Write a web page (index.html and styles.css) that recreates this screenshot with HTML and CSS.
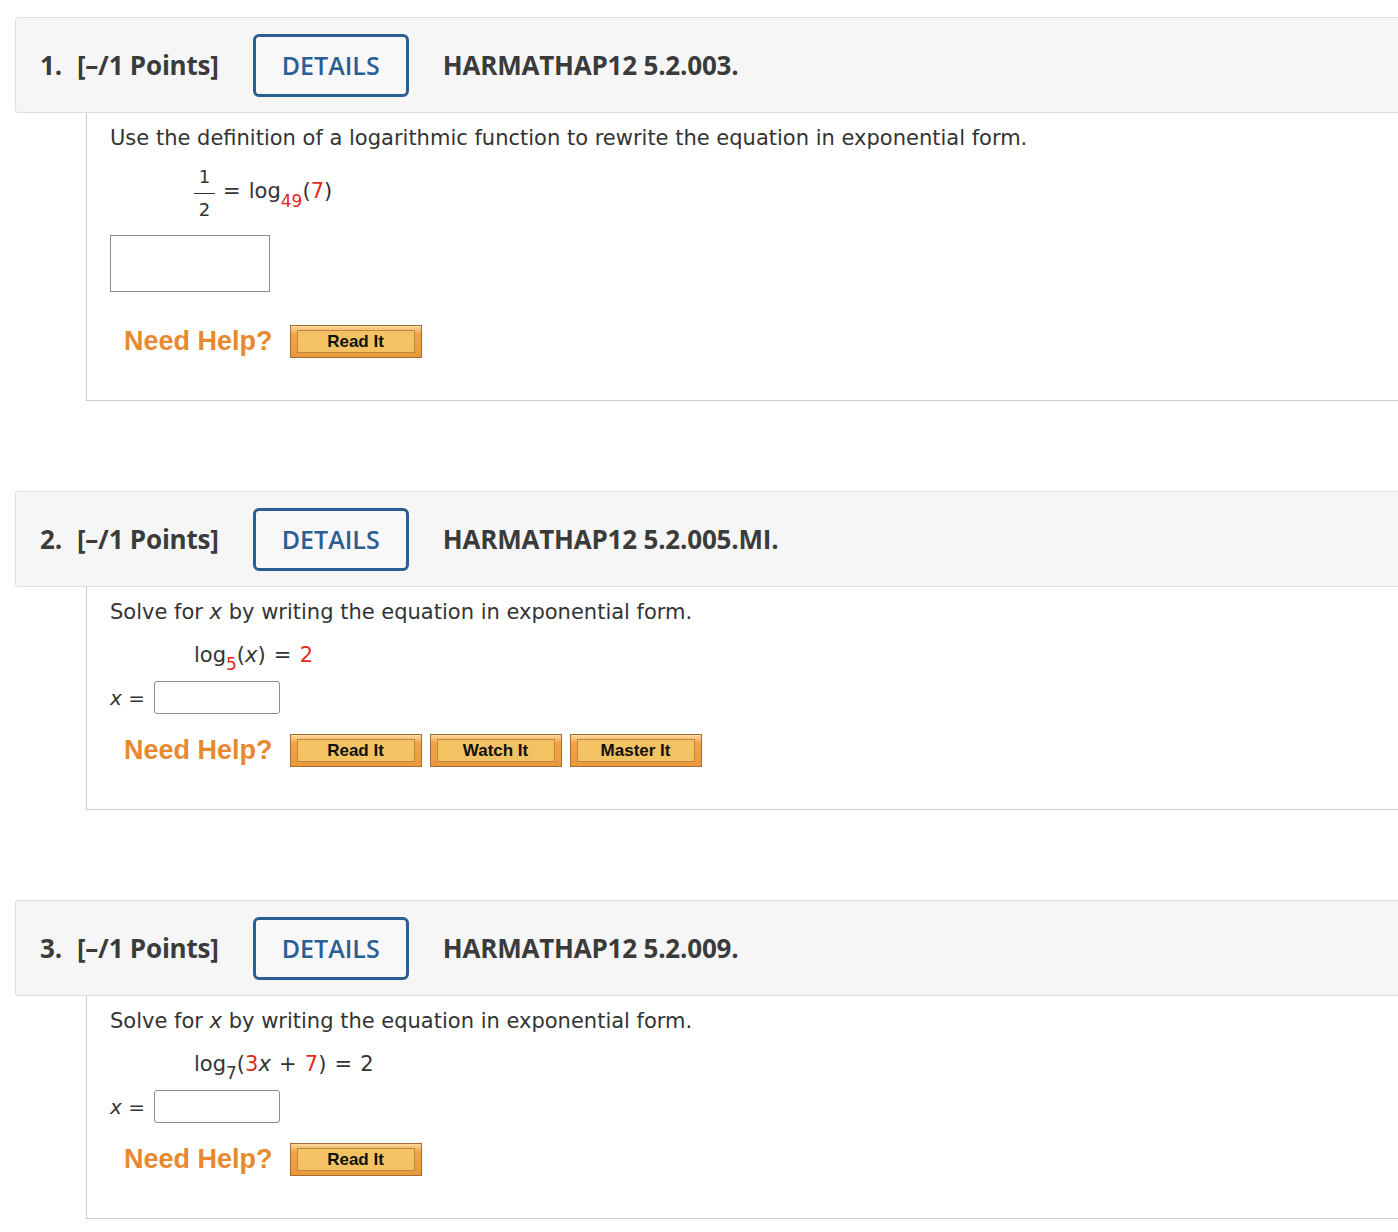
FILE: index.html
```html
<!DOCTYPE html>
<html>
<head>
<meta charset="utf-8">
<link rel="stylesheet" href="styles.css">
</head>
<body>
<div class="page">

  <section class="question">
    <div class="qhead">
      <span class="qnum"><span class="qn">1.</span><span>[–/1 Points]</span></span>
      <span class="details">DETAILS</span>
      <span class="qcode">HARMATHAP12 5.2.003.</span>
    </div>
    <div class="qbody">
      <p class="prompt">Use the definition of a logarithmic function to rewrite the equation in exponential form.</p>
      <div class="eq eq-frac">
        <span class="frac"><span class="num">1</span><span class="bar"></span><span class="den">2</span></span>
        <span class="frac-rest">= log<sub class="red">49</sub>(<span class="red">7</span>)</span>
      </div>
      <div class="bigbox"></div>
      <div class="help help-first">
        <span class="needhelp">Need Help?</span>
        <span class="btn"><span class="btn-in">Read It</span></span>
      </div>
    </div>
  </section>

  <section class="question">
    <div class="qhead">
      <span class="qnum"><span class="qn">2.</span><span>[–/1 Points]</span></span>
      <span class="details">DETAILS</span>
      <span class="qcode">HARMATHAP12 5.2.005.MI.</span>
    </div>
    <div class="qbody">
      <p class="prompt">Solve for <i>x</i> by writing the equation in exponential form.</p>
      <div class="eq">log<sub class="red">5</sub>(<i>x</i>) = <span class="red">2</span></div>
      <div class="answer"><span class="label"><i>x</i> =</span><span class="field"></span></div>
      <div class="help">
        <span class="needhelp">Need Help?</span>
        <span class="btn"><span class="btn-in">Read It</span></span>
        <span class="btn"><span class="btn-in">Watch It</span></span>
        <span class="btn"><span class="btn-in">Master It</span></span>
      </div>
    </div>
  </section>

  <section class="question">
    <div class="qhead">
      <span class="qnum"><span class="qn">3.</span><span>[–/1 Points]</span></span>
      <span class="details">DETAILS</span>
      <span class="qcode">HARMATHAP12 5.2.009.</span>
    </div>
    <div class="qbody">
      <p class="prompt">Solve for <i>x</i> by writing the equation in exponential form.</p>
      <div class="eq">log<sub>7</sub>(<span class="red">3</span><i>x</i> + <span class="red">7</span>) = 2</div>
      <div class="answer"><span class="label"><i>x</i> =</span><span class="field"></span></div>
      <div class="help">
        <span class="needhelp">Need Help?</span>
        <span class="btn"><span class="btn-in">Read It</span></span>
      </div>
    </div>
  </section>

</div>
</body>
</html>
```
FILE: styles.css
```css
html, body {
  margin: 0;
  padding: 0;
  background: #ffffff;
  overflow-x: hidden;
}

.page {
  padding: 17px 0 0 15px;
  margin-right: -30px;
}

.question {
  margin-bottom: 90px;
}

.qhead {
  box-sizing: border-box;
  height: 96px;
  background: #f6f6f6;
  border: 1px solid #dedede;
  border-radius: 3px;
  display: flex;
  align-items: center;
  gap: 34px;
  padding-left: 24px;
  font-family: "Open Sans", sans-serif;
  color: #3b3b3b;
}

.qnum, .qcode {
  font-size: 26px;
  font-weight: 700;
  white-space: pre;
  letter-spacing: -0.2px;
}

.qnum {
  display: flex;
  gap: 15px;
}

.details {
  box-sizing: border-box;
  width: 156px;
  height: 63px;
  border: 3px solid #2b5f94;
  border-radius: 6px;
  display: flex;
  align-items: center;
  justify-content: center;
  color: #2b5f94;
  font-size: 25px;
  font-weight: 600;
  background: #f8f8f8;
}

.qbody {
  margin-left: 71px;
  border-left: 1px solid #cccccc;
  border-bottom: 1px solid #cccccc;
  padding: 10px 0 42px 23px;
  font-family: "DejaVu Sans", Verdana, sans-serif;
  color: #333333;
}

.prompt {
  margin: 0;
  font-size: 21px;
  line-height: 30px;
}

.eq {
  margin: 13px 0 0 84px;
  font-size: 21px;
  line-height: 30px;
  word-spacing: 1.5px;
}

.eq sub {
  font-size: 17px;
  line-height: 0;
  vertical-align: -8px;
}

.red {
  color: #e4281c;
}

.eq-frac {
  display: flex;
  align-items: flex-start;
  margin-top: 14px;
}

.frac {
  display: flex;
  flex-direction: column;
  align-items: center;
  width: 21px;
  font-size: 18px;
  line-height: 20px;
}

.frac .num {
  padding-bottom: 6px;
}

.frac .bar {
  width: 21px;
  height: 1px;
  background: #333333;
}

.frac .den {
  padding-top: 6px;
}

.frac-rest {
  margin-left: 8px;
  margin-top: 9px;
}

.frac-rest sub {
  vertical-align: -9px;
}

.bigbox {
  box-sizing: border-box;
  width: 160px;
  height: 57px;
  margin-top: 15px;
  border: 1px solid #8c8c8c;
}

.answer {
  display: flex;
  align-items: center;
  margin-top: 11px;
  height: 33px;
}

.label {
  font-size: 20px;
  width: 44px;
}

.field {
  box-sizing: border-box;
  width: 126px;
  height: 33px;
  border: 1px solid #8c8c8c;
  border-radius: 3px;
}

.help {
  display: flex;
  align-items: center;
  margin-top: 20px;
  padding-left: 14px;
  gap: 8px;
}

.help-first {
  margin-top: 33px;
}

.needhelp {
  font-family: "Liberation Sans", Arial, sans-serif;
  font-weight: 700;
  font-size: 27px;
  color: #e8892f;
  margin-right: 9px;
}

.btn {
  box-sizing: border-box;
  width: 132px;
  height: 33px;
  border: 1px solid #a06d34;
  background: linear-gradient(#fcd9a0 0%, #f0a447 25%, #eb9a3a 100%);
  padding: 4px 6px;
}

.btn-in {
  display: block;
  box-sizing: border-box;
  height: 23px;
  border: 1px solid #bd8644;
  background: #f3c262;
  font-family: "Liberation Sans", Arial, sans-serif;
  font-weight: 700;
  font-size: 17px;
  line-height: 21px;
  text-align: center;
  color: #111111;
}
```
